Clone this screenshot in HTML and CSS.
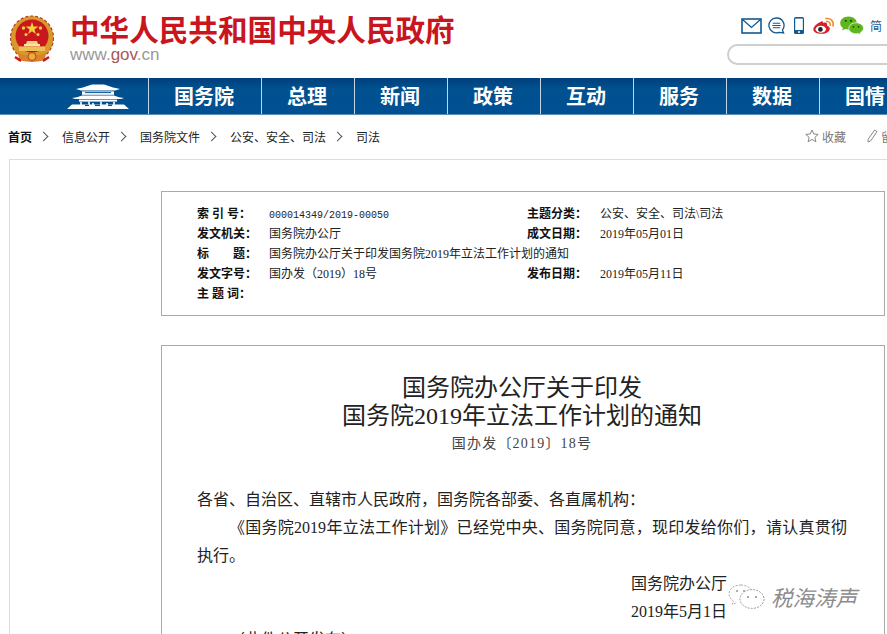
FILE: index.html
```html
<!DOCTYPE html>
<html lang="zh-CN">
<head>
    <meta charset="UTF-8">
    <title>国务院办公厅关于印发国务院2019年立法工作计划的通知</title>
    <link rel="stylesheet" href="styles.css">
</head>
<body>
<div class="page">
    <!-- header -->
    <div class="header">
        <svg class="emblem" viewBox="0 0 44 48" width="44" height="48">
            <ellipse cx="22" cy="23" rx="21.5" ry="22" fill="#d9982c"/>
            <ellipse cx="22" cy="23" rx="21.5" ry="22" fill="none" stroke="#b5401f" stroke-width="1.2" stroke-dasharray="3 2"/>
            <ellipse cx="22" cy="21" rx="16.5" ry="16.5" fill="#c8181e"/>
            <polygon points="22,7 23.5,11.6 28.3,11.6 24.4,14.4 25.9,19 22,16.2 18.1,19 19.6,14.4 15.7,11.6 20.5,11.6" fill="#f6cf3f"/>
            <circle cx="13.5" cy="13" r="1.7" fill="#f6cf3f"/>
            <circle cx="30.5" cy="13" r="1.7" fill="#f6cf3f"/>
            <circle cx="16" cy="19.5" r="1.5" fill="#f6cf3f"/>
            <circle cx="28" cy="19.5" r="1.5" fill="#f6cf3f"/>
            <polygon points="17,26 27,26 28,29 16,29" fill="#f3d27a"/>
            <rect x="14" y="29" width="16" height="2.4" fill="#f7e3a3"/>
            <rect x="9" y="31.4" width="26" height="4.6" fill="#eec05a"/>
            <path d="M8 38 Q22 44 36 38 L35 45 Q22 49 9 45 Z" fill="#d9822b"/>
            <circle cx="22" cy="41.5" r="4" fill="#e9ad3a" stroke="#b5401f" stroke-width="1"/>
            <path d="M5 42 L11 46 M39 42 L33 46" stroke="#c8181e" stroke-width="2.4"/>
        </svg>
        <div class="brand">
            <div class="brand-title">中华人民共和国中央人民政府</div>
            <div class="brand-url">www.<span class="brand-gov">gov</span>.cn</div>
        </div>
        <div class="head-side">
            <div class="head-icons">
                <svg class="ico-mail" viewBox="0 0 21 16" width="21" height="16">
                    <rect x="1" y="1" width="19" height="14" fill="none" stroke="#14598f" stroke-width="1.6"/>
                    <path d="M1.5 1.5 L10.5 9.5 L19.5 1.5" fill="none" stroke="#14598f" stroke-width="1.3"/>
                </svg>
                <svg class="ico-chat" viewBox="0 0 17 17" width="17" height="17">
                    <path d="M8.5 1 A7.4 7.4 0 1 0 11 15.3 L15.6 16 L14.4 13 A7.4 7.4 0 0 0 8.5 1 Z" fill="none" stroke="#14598f" stroke-width="1.3"/>
                    <path d="M4.8 6.2 H12.2 M4.3 8.5 H12.7 M4.8 10.8 H12.2" stroke="#14598f" stroke-width="1.1"/>
                </svg>
                <svg class="ico-phone" viewBox="0 0 10 17" width="10" height="17">
                    <rect x="0" y="0" width="10" height="17" rx="1.5" fill="#14598f"/>
                    <rect x="1.2" y="1.6" width="7.6" height="11.4" fill="#fff"/>
                    <circle cx="5" cy="15" r="1" fill="#fff"/>
                </svg>
                <svg class="ico-weibo" viewBox="0 0 22 17" width="22" height="17">
                    <path d="M8.4 4.4 C4 6.2 0 9.6 0.4 12.8 C0.8 15.8 5.2 17.2 9.4 16.8 C14 16.4 17 14 16.8 11.4 C16.6 9.6 14.8 9.2 14 8.8 C14.6 7 13.8 5.6 12 5.6 C11 5.6 10 6.2 10 6.2 C10.4 4.6 9.8 3.8 8.4 4.4 Z" fill="#d8202a"/>
                    <ellipse cx="7.8" cy="12.2" rx="5.2" ry="3.5" fill="#fff"/>
                    <circle cx="7.4" cy="12.4" r="2.3" fill="#222"/>
                    <path d="M13 1.6 C17.4 0.6 21.2 4.2 20 9 M13.6 4.6 C16 4.2 17.8 6 17.2 8.2" fill="none" stroke="#ee8a2a" stroke-width="1.5" stroke-linecap="round"/>
                </svg>
                <svg class="ico-wechat" viewBox="0 0 24 19" width="24" height="19">
                    <path d="M8.5 0.5 C3.8 0.5 0.2 3.4 0.2 7 C0.2 9.2 1.4 10.9 3 12.1 L2.2 14.6 L5.2 13.1 C6.2 13.4 7.2 13.5 8.5 13.5 C13.2 13.5 16.8 10.6 16.8 7 C16.8 3.4 13.2 0.5 8.5 0.5 Z" fill="#5fb51c"/>
                    <path d="M16 6.8 C12 6.8 8.8 9.3 8.8 12.3 C8.8 15.3 12 17.8 16 17.8 C16.9 17.8 17.7 17.7 18.5 17.4 L21 18.8 L20.4 16.5 C22.2 15.5 23.6 14 23.6 12.3 C23.6 9.3 20 6.8 16 6.8 Z" fill="#5fb51c" stroke="#fff" stroke-width="0.7"/>
                    <circle cx="5.8" cy="4.8" r="1.1" fill="#1d4a10"/>
                    <circle cx="11" cy="4.8" r="1.1" fill="#1d4a10"/>
                    <circle cx="13.4" cy="10.8" r="0.9" fill="#1d4a10"/>
                    <circle cx="18.6" cy="10.8" r="0.9" fill="#1d4a10"/>
                </svg>
                <a class="lang">简</a>
            </div>
            <div class="search"></div>
        </div>
    </div>

    <!-- nav -->
    <div class="nav">
        <div class="nav-logo">
            <svg viewBox="0 0 62 25" width="62" height="25">
                <path d="M9 5 Q15 4 25 0.5 H37 Q47 4 53 5 L48 6.6 H14 Z" fill="#fff"/>
                <rect x="15" y="7.4" width="32" height="3.4" fill="#fff"/>
                <path d="M18 8.6 H44" stroke="#0a4f8e" stroke-width="1"/>
                <path d="M5 14 Q10 13.4 15 11.4 H47 Q52 13.4 57 14 L54 15 H8 Z" fill="#fff"/>
                <rect x="12" y="15.6" width="38" height="2" fill="#fff"/>
                <path d="M0 25 L5 20.6 H57 L62 25 Z" fill="#fff"/>
                <path d="M14 18 V24 M22 17.6 V23 M26 19 V24 M34 17.6 V23 M40 19 V24 M47 18 V24" stroke="#fff" stroke-width="1.6"/>
                <path d="M18 21.4 H22 M28 21.4 H33 M41 21.4 H45" stroke="#0a4f8e" stroke-width="1.4"/>
            </svg>
        </div>
        <a class="nav-item nav-first">国务院</a>
        <a class="nav-item">总理</a>
        <a class="nav-item">新闻</a>
        <a class="nav-item">政策</a>
        <a class="nav-item">互动</a>
        <a class="nav-item">服务</a>
        <a class="nav-item">数据</a>
        <a class="nav-item">国情</a>
    </div>

    <!-- breadcrumb -->
    <div class="crumbs">
        <div class="crumb-list">
            <a class="crumb-home">首页</a>
            <span class="crumb-sep"></span>
            <a>信息公开</a>
            <span class="crumb-sep"></span>
            <a>国务院文件</a>
            <span class="crumb-sep"></span>
            <a>公安、安全、司法</a>
            <span class="crumb-sep"></span>
            <a>司法</a>
        </div>
        <div class="tools">
            <svg viewBox="0 0 14 14" width="14" height="14">
                <polygon points="7,1 8.8,5 13.2,5.4 9.9,8.3 10.9,12.8 7,10.4 3.1,12.8 4.1,8.3 0.8,5.4 5.2,5" fill="none" stroke="#888" stroke-width="1"/>
            </svg>
            <span class="tool-label">收藏</span>
            <svg class="tool-pen" viewBox="0 0 11 14" width="11" height="14">
                <path d="M7.6 1 L10 2.6 L3.6 12 L1 13 L1.2 10.2 Z" fill="none" stroke="#888" stroke-width="1"/>
            </svg>
            <span class="tool-label">留言</span>
        </div>
    </div>

    <!-- content -->
    <div class="frame">
        <div class="meta">
            <div class="meta-label">索 引 号&#xFF1A;</div>
            <div class="meta-value"><span class="mono">000014349/2019-00050</span></div>
            <div class="meta-label">主题分类&#xFF1A;</div>
            <div class="meta-value">公安、安全、司法\司法</div>

            <div class="meta-label">发文机关&#xFF1A;</div>
            <div class="meta-value">国务院办公厅</div>
            <div class="meta-label">成文日期&#xFF1A;</div>
            <div class="meta-value">2019年05月01日</div>

            <div class="meta-label">标&emsp;&emsp;题&#xFF1A;</div>
            <div class="meta-value meta-wide">国务院办公厅关于印发国务院2019年立法工作计划的通知</div>

            <div class="meta-label">发文字号&#xFF1A;</div>
            <div class="meta-value">国办发&#xFF08;2019&#xFF09;18号</div>
            <div class="meta-label">发布日期&#xFF1A;</div>
            <div class="meta-value">2019年05月11日</div>

            <div class="meta-label">主 题 词&#xFF1A;</div>
        </div>

        <div class="article">
            <h1 class="article-title">国务院办公厅关于印发<br>国务院2019年立法工作计划的通知</h1>
            <div class="article-no">国办发〔2019〕18号</div>
            <p class="para-first">各省、自治区、直辖市人民政府&#xFF0C;国务院各部委、各直属机构&#xFF1A;</p>
            <p class="para">《国务院2019年立法工作计划》已经党中央、国务院同意&#xFF0C;现印发给你们&#xFF0C;请认真贯彻执行。</p>
            <p class="sign">国务院办公厅</p>
            <p class="sign">2019年5月1日</p>
            <p class="para">&#xFF08;此件公开发布&#xFF09;</p>
        </div>
    </div>

    <!-- watermark -->
    <div class="watermark">
        <svg viewBox="0 0 38 26" width="38" height="26">
            <path d="M13 1 C6 1 1 5 1 10 C1 13 3 15.6 5.4 17 L4 20.4 L9 18.4" fill="none" stroke="#aaa" stroke-width="1" stroke-dasharray="2 1.4"/>
            <path d="M13 1 C18 1 22 3.4 24 6.6" fill="none" stroke="#aaa" stroke-width="1" stroke-dasharray="2 1.4"/>
            <ellipse cx="24" cy="15" rx="12" ry="9.4" fill="#fff" stroke="#999" stroke-width="1" stroke-dasharray="2 1.2"/>
            <circle cx="9" cy="7" r="1" fill="#999"/>
            <circle cx="16" cy="7" r="1" fill="#999"/>
            <circle cx="20" cy="13" r="1" fill="#888"/>
            <circle cx="28" cy="13" r="1" fill="#888"/>
        </svg>
        <span class="watermark-text">税海涛声</span>
    </div>
</div>
</body>
</html>
```

FILE: styles.css
```css
html, body {
    margin: 0;
    padding: 0;
    height: 100%;
    overflow: hidden;
}

body {
    background-color: #fff;
    font-family: "Liberation Serif", "Noto Sans CJK SC", serif;
    color: #222;
}

.page {
    position: relative;
    width: 1000px;
    height: 634px;
    overflow: hidden;
}

/* Header */
.header {
    display: flex;
    height: 78px;
    box-sizing: border-box;
    padding-left: 10px;
}

.emblem {
    margin-top: 15px;
}

.brand {
    margin-left: 16px;
    padding-top: 11px;
}

.brand-title {
    font-family: "Noto Sans CJK SC", sans-serif;
    font-size: 29.6px;
    font-weight: 700;
    line-height: 36px;
    color: #c9151e;
    white-space: nowrap;
}

.brand-url {
    font-family: "Liberation Sans", sans-serif;
    font-size: 17px;
    line-height: 16px;
    color: #999;
}

.brand-gov {
    color: #a9565a;
}

.head-side {
    margin-left: auto;
    width: 273px;
    padding-top: 16px;
}

.head-icons {
    display: flex;
    align-items: center;
    height: 19px;
    padding-left: 14px;
}

.ico-chat {
    margin-left: 6px;
}

.ico-phone {
    margin-left: 9px;
}

.ico-weibo {
    margin-left: 9px;
}

.ico-wechat {
    margin-left: 5px;
}

.lang {
    margin-left: 6px;
    font-family: "Noto Sans CJK SC", sans-serif;
    font-size: 12px;
    color: #14598f;
}

.search {
    margin-top: 9px;
    width: 240px;
    height: 17px;
    border: 2px solid #cfcfcf;
    border-radius: 11px;
}

/* Nav */
.nav {
    display: flex;
    height: 37px;
    background: linear-gradient(#003f7c, #00518f 30%, #005094);
    border-bottom: 1px solid #5d8fb5;
    box-sizing: border-box;
}

.nav-logo {
    width: 148px;
    box-sizing: border-box;
    padding: 6px 0 0 67px;
}

.nav-item {
    width: 93px;
    flex-shrink: 0;
    box-sizing: border-box;
    border-left: 1px solid #c4d6e6;
    padding-right: 2px;
    text-align: center;
    font-family: "Noto Sans CJK SC", sans-serif;
    font-size: 20px;
    font-weight: 700;
    line-height: 35px;
    color: #fff;
}

.nav-first {
    width: 113px;
}

/* Breadcrumb */
.crumbs {
    display: flex;
    justify-content: space-between;
    align-items: center;
    width: 905px;
    height: 44px;
    box-sizing: border-box;
    padding: 0 0 2px 8px;
    font-family: "Noto Sans CJK SC", sans-serif;
    font-size: 12px;
}

.crumb-list {
    display: flex;
    align-items: center;
}

.crumb-home {
    font-weight: 700;
    color: #111;
}

.crumb-sep {
    width: 6px;
    height: 6px;
    margin: 0 15px 0 8px;
    border-top: 1px solid #555;
    border-right: 1px solid #555;
    transform: rotate(45deg);
}

.tools {
    display: flex;
    align-items: center;
    color: #777;
}

.tool-label {
    margin-left: 3px;
}

.tool-pen {
    margin-left: 21px;
}

/* Frame with the two boxes */
.frame {
    margin-left: 9px;
    padding: 31px 0 0 151px;
    height: 600px;
    border-top: 1px solid #ddd;
    border-left: 1px solid #ddd;
}

.meta {
    display: grid;
    grid-template-columns: 72px 258px 73px 1fr;
    grid-auto-rows: 20px;
    width: 724px;
    height: 125px;
    box-sizing: border-box;
    padding: 12px 0 0 35px;
    border: 1px solid #aaa;
    font-size: 12px;
    line-height: 20px;
}

.meta-label {
    font-weight: 700;
    color: #111;
}

.meta-wide {
    grid-column: span 3;
}

.mono {
    font-family: "Liberation Mono", monospace;
    font-size: 10px;
}

.article {
    width: 724px;
    margin-top: 29px;
    box-sizing: border-box;
    padding: 28px 37px 0 35px;
    border: 1px solid #aaa;
    height: 400px;
}

.article-title {
    margin: 0;
    text-align: center;
    font-size: 24px;
    font-weight: 400;
    line-height: 28px;
    color: #222;
}

.article-no {
    text-align: center;
    font-size: 14px;
    letter-spacing: 1.2px;
    line-height: 28px;
    color: #444;
}

.para-first,
.para,
.sign {
    margin: 0;
    font-size: 16px;
    line-height: 28px;
}

.para-first {
    margin-top: 28px;
}

.para {
    text-indent: 32px;
    text-align: justify;
}

.sign {
    padding-left: 434px;
}

/* Watermark over the article */
.watermark {
    position: absolute;
    left: 728px;
    top: 581px;
    display: flex;
    align-items: center;
}

.watermark-text {
    margin-left: 5px;
    font-family: "Noto Sans CJK SC", sans-serif;
    font-size: 21.5px;
    font-style: italic;
    color: #8c8c8c;
}
```
